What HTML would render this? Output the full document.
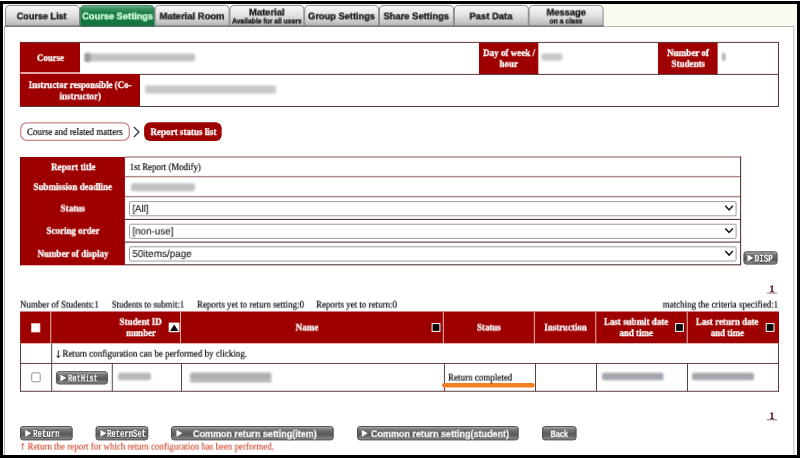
<!DOCTYPE html>
<html><head><meta charset="utf-8"><title>Report status list</title>
<style>
*{box-sizing:border-box;margin:0;padding:0}
html,body{width:800px;height:458px;overflow:hidden;background:#fff}
body{position:relative;font-family:"Liberation Serif",serif}
.a{position:absolute}
.t{position:absolute;left:0;top:0;white-space:nowrap;line-height:1;transform-origin:0 0;display:block;will-change:transform;text-rendering:geometricPrecision}
.frame{left:0;top:1px;width:800px;height:457px;background:#000}
.inner{left:3px;top:4px;width:794px;height:451px;background:#fcfbf0}
.content{left:4px;top:26px;width:791px;height:429px;background:#fff;border:1px solid #b4b4b4;border-bottom:none}
.tab{top:5px;height:21.5px;width:74.8px;border:1px solid #8e8e8e;border-bottom:1px solid #7c7c7c;border-radius:5px 5px 0 0;
 background:linear-gradient(#f6f6f6 0%,#eaeaea 35%,#d2d2d2 75%,#bebebe 100%)}
.tab.on{border-color:#4d7f62;border-bottom-color:#3d6b50;background:linear-gradient(#5aa87a 0%,#2a8a52 22%,#14793f 45%,#10763b 100%)}
.red{background:#990000}
.ln{background:#5a3838}
.lp{background:#b89090}
.ld{background:#4d3030}
.hd{background:#f3cfcf}
.pill{border-radius:6px}
.sel{left:129px;width:607.5px;height:14.5px;background:#fff;border:1px solid #9a9a9a;border-radius:2px}
.btn{height:14.2px;border:1px solid #3c3c3c;border-radius:3px;
 background:linear-gradient(#a6a6a6 0%,#8a8a8a 18%,#707070 45%,#626262 60%,#7c7c7c 85%,#909090 100%)}
.blur{filter:blur(1.6px);background:#b9b9b9;border-radius:3px}
.cb{background:#fff;border:1px solid #8a8a8a;border-radius:1px}
.ic{width:8.5px;height:8.5px;background:#0a0a0a;border:1px solid #fff}

</style></head>
<body>
<svg class="a" style="left:0;top:0" width="800" height="458" viewBox="0 0 800 458">
<rect x="0" y="0" width="800" height="458" fill="#fff" />
<rect x="0" y="1" width="800" height="457" fill="#000" />
<rect x="3" y="4" width="794" height="451" fill="#fcfbf0" />
<rect x="3" y="4" width="2" height="23" fill="#fefefa" />
<rect x="3" y="4" width="602" height="1.1" fill="#fefefa" />
<rect x="3" y="26.5" width="794" height="430" fill="#fff" />
<rect x="4.5" y="26.5" width="789.4" height="430" fill="#fff" stroke="#b0b0b0" stroke-width="0.9"/>
<rect x="5" y="455" width="789" height="3" fill="#000" />
<rect x="0" y="455" width="800" height="3" fill="#000" />
<defs>
<linearGradient id="tg" x1="0" y1="0" x2="0" y2="1"><stop offset="0" stop-color="#f7f7f7"/><stop offset="0.35" stop-color="#e9e9e9"/><stop offset="0.75" stop-color="#cccccc"/><stop offset="1" stop-color="#acacac"/></linearGradient>
<linearGradient id="tgon" x1="0" y1="0" x2="0" y2="1"><stop offset="0" stop-color="#74b690"/><stop offset="0.14" stop-color="#3f9664"/><stop offset="0.36" stop-color="#1a7e46"/><stop offset="1" stop-color="#0f743a"/></linearGradient>
<linearGradient id="bg" x1="0" y1="0" x2="0" y2="1"><stop offset="0" stop-color="#9c9c9c"/><stop offset="0.16" stop-color="#7e7e7e"/><stop offset="0.5" stop-color="#5e5e5e"/><stop offset="0.62" stop-color="#595959"/><stop offset="0.85" stop-color="#7c7c7c"/><stop offset="1" stop-color="#8e8e8e"/></linearGradient>
<filter id="bl" x="-20%" y="-100%" width="140%" height="300%"><feGaussianBlur stdDeviation="1.5"/></filter>
<filter id="bl2" x="-20%" y="-100%" width="140%" height="300%"><feGaussianBlur stdDeviation="1.1"/></filter>
</defs>
<path d="M5.5,26.5 L5.5,9.9 Q5.5,5.4 10.0,5.4 L75.0,5.4 Q79.5,5.4 79.5,9.9 L79.5,26.5 Z" fill="url(#tg)" stroke="#878787" stroke-width="1"/>
<path d="M80.3,26.5 L80.3,9.9 Q80.3,5.4 84.8,5.4 L149.79999999999998,5.4 Q154.29999999999998,5.4 154.29999999999998,9.9 L154.29999999999998,26.5 Z" fill="url(#tgon)" stroke="#4a7c60" stroke-width="1"/>
<path d="M155.1,26.5 L155.1,9.9 Q155.1,5.4 159.6,5.4 L224.59999999999997,5.4 Q229.09999999999997,5.4 229.09999999999997,9.9 L229.09999999999997,26.5 Z" fill="url(#tg)" stroke="#878787" stroke-width="1"/>
<path d="M229.89999999999998,26.5 L229.89999999999998,9.9 Q229.89999999999998,5.4 234.39999999999998,5.4 L299.4,5.4 Q303.9,5.4 303.9,9.9 L303.9,26.5 Z" fill="url(#tg)" stroke="#878787" stroke-width="1"/>
<path d="M304.7,26.5 L304.7,9.9 Q304.7,5.4 309.2,5.4 L374.2,5.4 Q378.7,5.4 378.7,9.9 L378.7,26.5 Z" fill="url(#tg)" stroke="#878787" stroke-width="1"/>
<path d="M379.5,26.5 L379.5,9.9 Q379.5,5.4 384.0,5.4 L449.0,5.4 Q453.5,5.4 453.5,9.9 L453.5,26.5 Z" fill="url(#tg)" stroke="#878787" stroke-width="1"/>
<path d="M454.29999999999995,26.5 L454.29999999999995,9.9 Q454.29999999999995,5.4 458.79999999999995,5.4 L523.8,5.4 Q528.3,5.4 528.3,9.9 L528.3,26.5 Z" fill="url(#tg)" stroke="#878787" stroke-width="1"/>
<path d="M529.1,26.5 L529.1,9.9 Q529.1,5.4 533.6,5.4 L598.6,5.4 Q603.1,5.4 603.1,9.9 L603.1,26.5 Z" fill="url(#tg)" stroke="#878787" stroke-width="1"/>
<rect x="5" y="25.5" width="599" height="1" fill="#757575" />
<rect x="80.3" y="25.5" width="74.2" height="1" fill="#2f6b4a" />
<rect x="20" y="42" width="60" height="30.3" fill="#9e0000" />
<rect x="479" y="42" width="59.3" height="32.5" fill="#9e0000" />
<rect x="658" y="42" width="59.6" height="32.5" fill="#9e0000" />
<rect x="20" y="73.9" width="120" height="32.6" fill="#9e0000" />
<rect x="20" y="72.3" width="60" height="1.6" fill="#e79c9c" />
<rect x="20" y="41.9" width="759" height="1" fill="#5a3838" />
<rect x="140" y="73.9" width="639" height="1" fill="#5a3838" />
<rect x="20" y="106.0" width="759" height="1" fill="#5a3838" />
<rect x="778.0" y="42" width="1" height="64.7" fill="#5a3838" />
<rect x="19.9" y="42" width="0.6" height="64.7" fill="#9e0000" />
<rect x="20.7" y="122.8" width="108.6" height="17.5" rx="6" fill="#fff" stroke="#c98a8a" stroke-width="1.3"/>
<rect x="144.1" y="122.2" width="77.6" height="18.8" rx="6" fill="#9e0000"/>
<polyline points="133.9,127 139,132 133.9,137" fill="none" stroke="#3c3c3c" stroke-width="1.3"/>
<rect x="20.1" y="157" width="104.8" height="108.3" fill="#9e0000" />
<rect x="20.1" y="157" width="0.9" height="108.3" fill="#6a0606" />
<rect x="124.9" y="156.3" width="616.1" height="1.4" fill="#b08585" />
<rect x="124.9" y="175.9" width="616.1" height="1.4" fill="#b08585" />
<rect x="124.9" y="195.9" width="616.1" height="1.4" fill="#b08585" />
<rect x="124.9" y="218.88" width="616.1" height="1.05" fill="#4d3030" />
<rect x="124.9" y="241.57" width="616.1" height="1.05" fill="#4d3030" />
<rect x="124.9" y="264.28" width="616.1" height="1.05" fill="#4d3030" />
<rect x="740.08" y="156.5" width="1.05" height="108.8" fill="#4d3030" />
<rect x="129.5" y="201.6" width="606.6" height="14.2" rx="1.1" fill="#fff" stroke="#9c9c9c" stroke-width="1"/>
<polyline points="725.3,205.8 729.1,209.9 732.9,205.8" fill="none" stroke="#151515" stroke-width="1.5"/>
<rect x="129.5" y="224.2" width="606.6" height="14.2" rx="1.1" fill="#fff" stroke="#9c9c9c" stroke-width="1"/>
<polyline points="725.3,228.4 729.1,232.5 732.9,228.4" fill="none" stroke="#151515" stroke-width="1.5"/>
<rect x="129.5" y="246.8" width="606.6" height="14.2" rx="1.1" fill="#fff" stroke="#9c9c9c" stroke-width="1"/>
<polyline points="725.3,251.00000000000003 729.1,255.10000000000002 732.9,251.00000000000003" fill="none" stroke="#151515" stroke-width="1.5"/>
<rect x="743.9" y="251.8" width="33.2" height="12.3" rx="2.4" fill="url(#bg)" stroke="#4c4c4c" stroke-width="1"/>
<rect x="745.0" y="252.60000000000002" width="31.000000000000004" height="0.9" fill="#b4b4b4" opacity="0.8"/>
<polygon points="747.5,254.75 753.4,258.05 747.5,261.35" fill="#fff"/>
<rect x="20.1" y="311.5" width="758.9" height="31.8" fill="#9e0000" />
<rect x="50.35" y="311.5" width="0.9" height="31.8" fill="#f0c8c8" />
<rect x="180.05" y="311.5" width="0.9" height="31.8" fill="#f0c8c8" />
<rect x="442.85" y="311.5" width="0.9" height="31.8" fill="#f0c8c8" />
<rect x="533.85" y="311.5" width="0.9" height="31.8" fill="#f0c8c8" />
<rect x="595.35" y="311.5" width="0.9" height="31.8" fill="#f0c8c8" />
<rect x="686.75" y="311.5" width="0.9" height="31.8" fill="#f0c8c8" />
<rect x="20.1" y="343.3" width="0.9" height="48.4" fill="#4e2a2e" />
<rect x="778.1" y="343.3" width="0.9" height="48.4" fill="#4e2a2e" />
<rect x="20.1" y="362.95" width="758.9" height="0.9" fill="#4e2a2e" />
<rect x="20.1" y="390.8" width="758.9" height="0.9" fill="#4e2a2e" />
<rect x="51.25" y="343.3" width="0.9" height="47.95" fill="#4e2a2e" />
<rect x="111.8" y="363.4" width="0.9" height="27.85" fill="#4e2a2e" />
<rect x="181.05" y="363.4" width="0.9" height="27.85" fill="#4e2a2e" />
<rect x="443.95" y="363.4" width="0.9" height="27.85" fill="#4e2a2e" />
<rect x="535.05" y="363.4" width="0.9" height="27.85" fill="#4e2a2e" />
<rect x="596.05" y="363.4" width="0.9" height="27.85" fill="#4e2a2e" />
<rect x="687.05" y="363.4" width="0.9" height="27.85" fill="#4e2a2e" />
<rect x="31.3" y="323.4" width="8.7" height="8.7" fill="#fff" stroke="#e6c4c4" stroke-width="0.6"/>
<rect x="31.7" y="372.9" width="8.5" height="8.9" rx="1.3" fill="#fff" stroke="#949494" stroke-width="1"/>
<rect x="168.7" y="322.6" width="10.7" height="9.6" fill="#fff" />
<polygon points="170.1,331.0 174.2,324.5 178.4,331.0" fill="#080808"/>
<rect x="432.1" y="323.6" width="7.8" height="7.8" fill="#0a0a0a" stroke="#fff" stroke-width="1"/>
<rect x="675.5999999999999" y="323.6" width="7.8" height="7.8" fill="#0a0a0a" stroke="#fff" stroke-width="1"/>
<rect x="766.1999999999999" y="323.6" width="7.8" height="7.8" fill="#0a0a0a" stroke="#fff" stroke-width="1"/>
<rect x="56.4" y="371.7" width="51" height="12.3" rx="2.4" fill="url(#bg)" stroke="#4c4c4c" stroke-width="1"/>
<rect x="57.5" y="372.5" width="48.8" height="0.9" fill="#b4b4b4" opacity="0.8"/>
<polygon points="60.4,374.65 66.3,377.95 60.4,381.25" fill="#fff"/>
<rect x="442" y="382.9" width="92.6" height="4.7" rx="2.3" fill="#f57e22"/>
<path d="M58.3,350.3 L58.3,357.6 M56.7,355.6 L58.3,357.8 L59.9,355.6" fill="none" stroke="#111" stroke-width="0.9"/>
<path d="M22.7,450.1 L22.7,443.5 M21.3,445.5 L22.7,443.4 L24.1,445.5" fill="none" stroke="#d4573e" stroke-width="0.8"/>
<rect x="766.8" y="292.6" width="10.2" height="0.85" fill="#6e5f66" />
<rect x="766.8" y="419.35" width="10.2" height="0.85" fill="#6e5f66" />
<rect x="20.5" y="426.6" width="51.7" height="13.3" rx="2.4" fill="url(#bg)" stroke="#4c4c4c" stroke-width="1"/>
<rect x="21.6" y="427.40000000000003" width="49.5" height="0.9" fill="#b4b4b4" opacity="0.8"/>
<polygon points="25.3,430.05 31.200000000000003,433.35 25.3,436.65000000000003" fill="#fff"/>
<rect x="96.0" y="426.6" width="51.8" height="13.3" rx="2.4" fill="url(#bg)" stroke="#4c4c4c" stroke-width="1"/>
<rect x="97.1" y="427.40000000000003" width="49.599999999999994" height="0.9" fill="#b4b4b4" opacity="0.8"/>
<polygon points="100.5,430.05 106.4,433.35 100.5,436.65000000000003" fill="#fff"/>
<rect x="171.5" y="426.6" width="161.7" height="13.3" rx="2.4" fill="url(#bg)" stroke="#4c4c4c" stroke-width="1"/>
<rect x="172.6" y="427.40000000000003" width="159.5" height="0.9" fill="#b4b4b4" opacity="0.8"/>
<polygon points="176.5,430.05 182.4,433.35 176.5,436.65000000000003" fill="#fff"/>
<rect x="357.6" y="426.6" width="160.6" height="13.3" rx="2.4" fill="url(#bg)" stroke="#4c4c4c" stroke-width="1"/>
<rect x="358.70000000000005" y="427.40000000000003" width="158.4" height="0.9" fill="#b4b4b4" opacity="0.8"/>
<polygon points="361.8,430.05 367.7,433.35 361.8,436.65000000000003" fill="#fff"/>
<rect x="542.6" y="426.6" width="33.5" height="13.3" rx="2.4" fill="url(#bg)" stroke="#4c4c4c" stroke-width="1"/>
<rect x="543.7" y="427.40000000000003" width="31.3" height="0.9" fill="#b4b4b4" opacity="0.8"/>
<rect x="85" y="53.5" width="110" height="8" rx="2" fill="#c2c2c2" filter="url(#bl2)"/>
<rect x="84.5" y="53" width="6" height="9" rx="2" fill="#9a9a9a" filter="url(#bl2)"/>
<rect x="145" y="85.5" width="131" height="8" rx="2" fill="#c8c8c8" filter="url(#bl2)"/>
<rect x="541.5" y="53.5" width="21" height="7" rx="2" fill="#c8c8c8" filter="url(#bl2)"/>
<rect x="722" y="53" width="3.5" height="8" rx="2" fill="#a8a8a8" filter="url(#bl2)"/>
<rect x="131" y="183.2" width="64" height="8" rx="2" fill="#c2c2c6" filter="url(#bl2)"/>
<rect x="118" y="372.8" width="33" height="7.5" rx="2" fill="#b8b8b8" filter="url(#bl2)"/>
<rect x="190" y="372.5" width="81.5" height="7.5" rx="2" fill="#b0b0b0" filter="url(#bl2)"/>
<rect x="189.5" y="380.4" width="82.5" height="1.6" rx="2" fill="#808080" filter="url(#bl2)"/>
<rect x="602" y="372.8" width="61.5" height="7.5" rx="2" fill="#a2a7ae" filter="url(#bl2)"/>
<rect x="692" y="372.8" width="62" height="7.5" rx="2" fill="#a2a7ae" filter="url(#bl2)"/>
</svg>

<span class="t" style="font-family:'Liberation Sans', sans-serif;font-weight:bold;font-size:9.5px;color:#141414;-webkit-text-stroke:0.3px #141414;transform:translate(16.75px,12.30px) scaleX(0.9538);">Course List</span>
<span class="t" style="font-family:'Liberation Sans', sans-serif;font-weight:bold;font-size:9.5px;color:#d8ffe6;-webkit-text-stroke:0.3px #d8ffe6;transform:translate(82.25px,12.30px) scaleX(0.9724);">Course Settings</span>
<span class="t" style="font-family:'Liberation Sans', sans-serif;font-weight:bold;font-size:9.5px;color:#141414;-webkit-text-stroke:0.3px #141414;transform:translate(159.50px,12.30px) scaleX(0.9928);">Material Room</span>
<span class="t" style="font-family:'Liberation Sans', sans-serif;font-weight:bold;font-size:9.5px;color:#141414;-webkit-text-stroke:0.3px #141414;transform:translate(249.00px,8.40px) scaleX(0.9887);">Material</span>
<span class="t" style="font-family:'Liberation Sans', sans-serif;font-weight:bold;font-size:7.5px;color:#141414;-webkit-text-stroke:0.3px #141414;transform:translate(232.00px,17.40px) scaleX(0.9021);">Available for all users</span>
<span class="t" style="font-family:'Liberation Sans', sans-serif;font-weight:bold;font-size:9.5px;color:#141414;-webkit-text-stroke:0.3px #141414;transform:translate(308.00px,12.30px) scaleX(0.9763);">Group Settings</span>
<span class="t" style="font-family:'Liberation Sans', sans-serif;font-weight:bold;font-size:9.5px;color:#141414;-webkit-text-stroke:0.3px #141414;transform:translate(383.50px,12.30px) scaleX(0.9845);">Share Settings</span>
<span class="t" style="font-family:'Liberation Sans', sans-serif;font-weight:bold;font-size:9.5px;color:#141414;-webkit-text-stroke:0.3px #141414;transform:translate(469.50px,12.30px) scaleX(0.9928);">Past Data</span>
<span class="t" style="font-family:'Liberation Sans', sans-serif;font-weight:bold;font-size:9.5px;color:#141414;-webkit-text-stroke:0.3px #141414;transform:translate(546.50px,8.40px) scaleX(0.9840);">Message</span>
<span class="t" style="font-family:'Liberation Sans', sans-serif;font-weight:bold;font-size:7.5px;color:#141414;-webkit-text-stroke:0.3px #141414;transform:translate(549.50px,17.40px) scaleX(0.9096);">on a class</span>
<span class="t" style="font-family:'Liberation Serif', serif;font-weight:bold;font-size:10px;color:#ffffff;-webkit-text-stroke:0.3px #ffffff;transform:translate(36.90px,53.90px) scaleX(0.8867);">Course</span>
<span class="t" style="font-family:'Liberation Serif', serif;font-weight:bold;font-size:10px;color:#ffffff;-webkit-text-stroke:0.3px #ffffff;transform:translate(28.65px,81.00px) scaleX(0.8877);">Instructor responsible (Co-</span>
<span class="t" style="font-family:'Liberation Serif', serif;font-weight:bold;font-size:10px;color:#ffffff;-webkit-text-stroke:0.3px #ffffff;transform:translate(59.50px,92.30px) scaleX(0.9000);">instructor)</span>
<span class="t" style="font-family:'Liberation Serif', serif;font-weight:bold;font-size:10px;color:#ffffff;-webkit-text-stroke:0.3px #ffffff;transform:translate(483.00px,48.90px) scaleX(0.9043);">Day of week /</span>
<span class="t" style="font-family:'Liberation Serif', serif;font-weight:bold;font-size:10px;color:#ffffff;-webkit-text-stroke:0.3px #ffffff;transform:translate(499.50px,59.80px) scaleX(0.8997);">hour</span>
<span class="t" style="font-family:'Liberation Serif', serif;font-weight:bold;font-size:10px;color:#ffffff;-webkit-text-stroke:0.3px #ffffff;transform:translate(667.00px,48.90px) scaleX(0.9090);">Number of</span>
<span class="t" style="font-family:'Liberation Serif', serif;font-weight:bold;font-size:10px;color:#ffffff;-webkit-text-stroke:0.3px #ffffff;transform:translate(671.50px,59.80px) scaleX(0.8993);">Students</span>
<span class="t" style="font-family:'Liberation Serif', serif;font-weight:normal;font-size:10px;color:#000;-webkit-text-stroke:0.18px #000;transform:translate(27.00px,128.00px) scaleX(0.8942);">Course and related matters</span>
<span class="t" style="font-family:'Liberation Serif', serif;font-weight:bold;font-size:10px;color:#ffffff;-webkit-text-stroke:0.3px #ffffff;transform:translate(150.40px,128.00px) scaleX(0.9068);">Report status list</span>
<span class="t" style="font-family:'Liberation Serif', serif;font-weight:bold;font-size:10px;color:#ffffff;-webkit-text-stroke:0.3px #ffffff;transform:translate(51.00px,163.10px) scaleX(0.9053);">Report title</span>
<span class="t" style="font-family:'Liberation Serif', serif;font-weight:bold;font-size:10px;color:#ffffff;-webkit-text-stroke:0.3px #ffffff;transform:translate(33.50px,182.90px) scaleX(0.8967);">Submission deadline</span>
<span class="t" style="font-family:'Liberation Serif', serif;font-weight:bold;font-size:10px;color:#ffffff;-webkit-text-stroke:0.3px #ffffff;transform:translate(60.50px,204.40px) scaleX(0.9180);">Status</span>
<span class="t" style="font-family:'Liberation Serif', serif;font-weight:bold;font-size:10px;color:#ffffff;-webkit-text-stroke:0.3px #ffffff;transform:translate(46.50px,226.80px) scaleX(0.8959);">Scoring order</span>
<span class="t" style="font-family:'Liberation Serif', serif;font-weight:bold;font-size:10px;color:#ffffff;-webkit-text-stroke:0.3px #ffffff;transform:translate(37.50px,249.80px) scaleX(0.8955);">Number of display</span>
<span class="t" style="font-family:'Liberation Serif', serif;font-weight:normal;font-size:10px;color:#000;-webkit-text-stroke:0.18px #000;transform:translate(129.70px,163.10px) scaleX(0.8827);">1st Report (Modify)</span>
<span class="t" style="font-family:'Liberation Sans', sans-serif;font-weight:normal;font-size:10px;color:#1c1c1c;-webkit-text-stroke:0.12px #1c1c1c;transform:translate(132.40px,205.00px) scaleX(0.9597);">[All]</span>
<span class="t" style="font-family:'Liberation Sans', sans-serif;font-weight:normal;font-size:10px;color:#1c1c1c;-webkit-text-stroke:0.12px #1c1c1c;transform:translate(132.40px,227.40px) scaleX(0.9831);">[non-use]</span>
<span class="t" style="font-family:'Liberation Sans', sans-serif;font-weight:normal;font-size:10px;color:#1c1c1c;-webkit-text-stroke:0.12px #1c1c1c;transform:translate(132.40px,250.00px) scaleX(0.9859);">50items/page</span>
<span class="t" style="font-family:'Liberation Serif', serif;font-weight:normal;font-size:10px;color:#000;-webkit-text-stroke:0.18px #000;transform:translate(20.00px,300.60px) scaleX(0.8916);">Number of Students:1</span>
<span class="t" style="font-family:'Liberation Serif', serif;font-weight:normal;font-size:10px;color:#000;-webkit-text-stroke:0.18px #000;transform:translate(111.75px,300.60px) scaleX(0.8816);">Students to submit:1</span>
<span class="t" style="font-family:'Liberation Serif', serif;font-weight:normal;font-size:10px;color:#000;-webkit-text-stroke:0.18px #000;transform:translate(196.90px,300.60px) scaleX(0.8967);">Reports yet to return setting:0</span>
<span class="t" style="font-family:'Liberation Serif', serif;font-weight:normal;font-size:10px;color:#000;-webkit-text-stroke:0.18px #000;transform:translate(316.00px,300.60px) scaleX(0.8974);">Reports yet to return:0</span>
<span class="t" style="font-family:'Liberation Serif', serif;font-weight:normal;font-size:10px;color:#000;-webkit-text-stroke:0.18px #000;transform:translate(662.70px,300.60px) scaleX(0.8945);">matching the criteria specified:1</span>
<span class="t" style="font-family:'Liberation Serif', serif;font-weight:bold;font-size:10px;color:#6a1c2c;-webkit-text-stroke:0.35px #6a1c2c;transform:translate(769.60px,284.60px) scaleX(1.0000);">1</span>
<span class="t" style="font-family:'Liberation Serif', serif;font-weight:bold;font-size:10px;color:#6a1c2c;-webkit-text-stroke:0.35px #6a1c2c;transform:translate(769.60px,411.85px) scaleX(1.0000);">1</span>
<span class="t" style="font-family:'Liberation Serif', serif;font-weight:bold;font-size:10px;color:#ffffff;-webkit-text-stroke:0.3px #ffffff;transform:translate(119.50px,317.80px) scaleX(0.8995);">Student ID</span>
<span class="t" style="font-family:'Liberation Serif', serif;font-weight:bold;font-size:10px;color:#ffffff;-webkit-text-stroke:0.3px #ffffff;transform:translate(126.25px,329.00px) scaleX(0.8700);">number</span>
<span class="t" style="font-family:'Liberation Serif', serif;font-weight:bold;font-size:10px;color:#ffffff;-webkit-text-stroke:0.3px #ffffff;transform:translate(295.50px,323.40px) scaleX(0.9200);">Name</span>
<span class="t" style="font-family:'Liberation Serif', serif;font-weight:bold;font-size:10px;color:#ffffff;-webkit-text-stroke:0.3px #ffffff;transform:translate(477.00px,323.40px) scaleX(0.8899);">Status</span>
<span class="t" style="font-family:'Liberation Serif', serif;font-weight:bold;font-size:10px;color:#ffffff;-webkit-text-stroke:0.3px #ffffff;transform:translate(544.25px,323.40px) scaleX(0.8892);">Instruction</span>
<span class="t" style="font-family:'Liberation Serif', serif;font-weight:bold;font-size:10px;color:#ffffff;-webkit-text-stroke:0.3px #ffffff;transform:translate(603.90px,317.80px) scaleX(0.8969);">Last submit date</span>
<span class="t" style="font-family:'Liberation Serif', serif;font-weight:bold;font-size:10px;color:#ffffff;-webkit-text-stroke:0.3px #ffffff;transform:translate(619.40px,329.00px) scaleX(0.8960);">and time</span>
<span class="t" style="font-family:'Liberation Serif', serif;font-weight:bold;font-size:10px;color:#ffffff;-webkit-text-stroke:0.3px #ffffff;transform:translate(695.80px,317.80px) scaleX(0.8981);">Last return date</span>
<span class="t" style="font-family:'Liberation Serif', serif;font-weight:bold;font-size:10px;color:#ffffff;-webkit-text-stroke:0.3px #ffffff;transform:translate(710.70px,329.00px) scaleX(0.8880);">and time</span>
<span class="t" style="font-family:'Liberation Serif', serif;font-weight:normal;font-size:10px;color:#000;-webkit-text-stroke:0.18px #000;transform:translate(62.40px,349.70px) scaleX(0.8971);">Return configuration can be performed by clicking.</span>
<span class="t" style="font-family:'Liberation Serif', serif;font-weight:normal;font-size:10px;color:#000;-webkit-text-stroke:0.18px #000;transform:translate(448.00px,373.60px) scaleX(0.8995);">Return completed</span>
<span class="t" style="font-family:'Liberation Mono', monospace;font-weight:bold;font-size:11px;color:#ffffff;-webkit-text-stroke:0.1px #ffffff;transform:translate(33.10px,430.00px) scaleX(0.6690);text-shadow:0 1px 0 #333,0 -1px 0 #444;">Return</span>
<span class="t" style="font-family:'Liberation Mono', monospace;font-weight:bold;font-size:11px;color:#ffffff;-webkit-text-stroke:0.1px #ffffff;transform:translate(107.00px,430.00px) scaleX(0.6563);text-shadow:0 1px 0 #333,0 -1px 0 #444;">ReternSet</span>
<span class="t" style="font-family:'Liberation Sans', sans-serif;font-weight:bold;font-size:10px;color:#ffffff;-webkit-text-stroke:0.3px #ffffff;transform:translate(193.00px,430.20px) scaleX(0.8978);text-shadow:0 1px 0 #333,0 -1px 0 #444;">Common return setting(item)</span>
<span class="t" style="font-family:'Liberation Sans', sans-serif;font-weight:bold;font-size:10px;color:#ffffff;-webkit-text-stroke:0.3px #ffffff;transform:translate(370.90px,430.20px) scaleX(0.9007);text-shadow:0 1px 0 #333,0 -1px 0 #444;">Common return setting(student)</span>
<span class="t" style="font-family:'Liberation Sans', sans-serif;font-weight:bold;font-size:10px;color:#ffffff;-webkit-text-stroke:0.3px #ffffff;transform:translate(550.60px,430.20px) scaleX(0.7320);text-shadow:0 1px 0 #333,0 -1px 0 #444;">Back</span>
<span class="t" style="font-family:'Liberation Mono', monospace;font-weight:bold;font-size:11px;color:#ffffff;-webkit-text-stroke:0.1px #ffffff;transform:translate(68.00px,374.60px) scaleX(0.6491);text-shadow:0 1px 0 #333,0 -1px 0 #444;">RetHist</span>
<span class="t" style="font-family:'Liberation Mono', monospace;font-weight:bold;font-size:11px;color:#ffffff;-webkit-text-stroke:0.1px #ffffff;transform:translate(754.60px,254.80px) scaleX(0.6892);text-shadow:0 1px 0 #333,0 -1px 0 #444;">DISP</span>
<span class="t" style="font-family:'Liberation Serif', serif;font-weight:normal;font-size:10px;color:#cf4a30;-webkit-text-stroke:0.15px #cf4a30;transform:translate(27.50px,442.60px) scaleX(0.8931);">Return the report for which return configuration has been performed.</span>

</body></html>
